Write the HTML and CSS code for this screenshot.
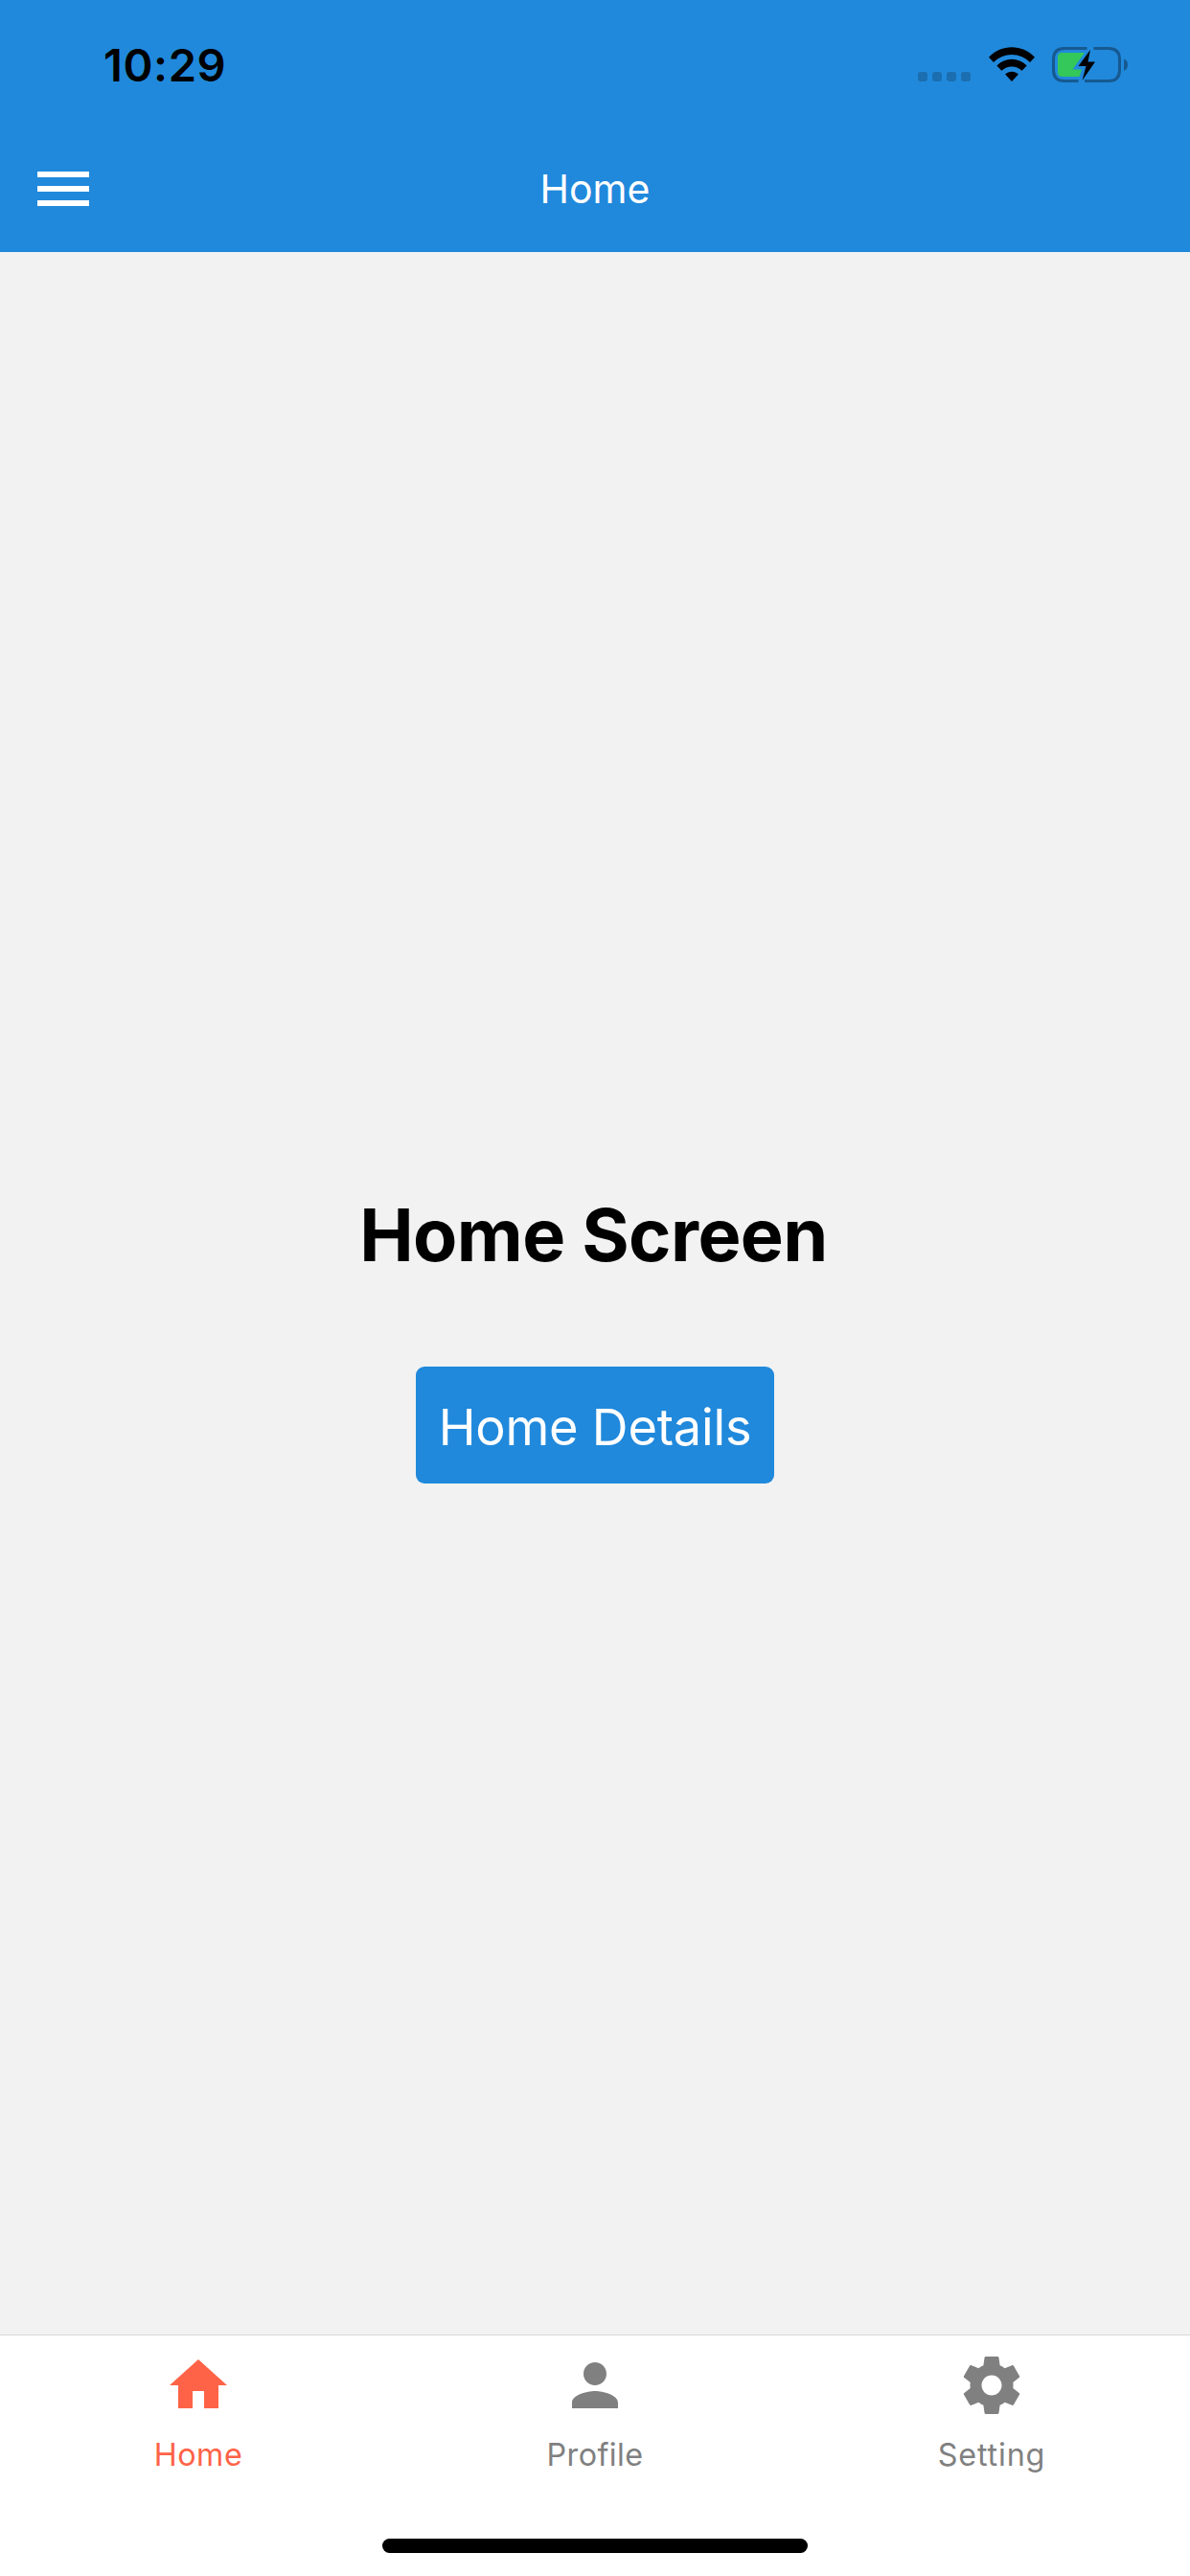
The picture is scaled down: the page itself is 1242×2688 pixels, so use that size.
FILE: index.html
```html
<!DOCTYPE html>
<html lang="en">
<head>
<meta charset="utf-8">
<title>Home</title>
<link rel="stylesheet" href="styles.css">
</head>
<body>
<div class="app">
  <header class="header">
    <div class="status-bar">
      <span class="time">10:29</span>
      <div class="status-icons">
        <div class="signal"><i></i><i></i><i></i><i></i></div>
        <svg class="wifi" width="48" height="36" viewBox="0 0 48 36">
          <path d="M0 10.700C13.500-3.200 34.500-3.200 48 10.700L43 16C32.500 5.200 15.500 5.200 5 16Z"/>
          <path d="M8.300 19.400C17.200 10.500 30.800 10.500 39.700 19.400L34.600 24.800C28.700 18.900 19.300 18.900 13.400 24.800Z"/>
          <path d="M17.100 28.500C21.100 24.900 26.900 24.900 30.900 28.500L24 36Z"/>
        </svg>
        <svg class="battery" width="80" height="38" viewBox="0 0 80 38">
          <path class="shell" d="M36.500 1.500H13Q1.500 1.500 1.500 13V24Q1.500 35.500 13 35.500H27.500M43.500 1.500H59Q70.500 1.500 70.500 13V24Q70.500 35.500 59 35.500H34"/>
          <path class="tip" d="M75 12.500Q79 14 79 18.500Q79 23 75 25Z"/>
          <path class="charge" d="M11 6H34L21.500 23.500H31L28.500 31H11Q6 31 6 26V11Q6 6 11 6Z"/>
          <path d="M40 3L27.500 20H35.500L31.500 35L45 15.500H37.500Z"/>
        </svg>
      </div>
    </div>
    <div class="nav-bar">
      <button class="menu" aria-label="Menu">
        <svg width="72" height="72" viewBox="0 0 24 24"><path d="M3 18h18v-2H3v2zm0-5h18v-2H3v2zm0-7v2h18V6H3z"/></svg>
      </button>
      <span class="nav-title">Home</span>
    </div>
  </header>
  <main class="screen">
    <h1 class="heading">Home Screen</h1>
    <button class="details">Home Details</button>
  </main>
  <footer class="footer">
    <nav class="tabs">
      <a class="tab active">
        <svg width="72" height="72" viewBox="0 0 24 24"><path d="M10 20v-6h4v6h5v-8h3L12 3 2 12h3v8z"/></svg>
        <span class="label-home">Home</span>
      </a>
      <a class="tab">
        <svg width="72" height="72" viewBox="0 0 24 24"><path d="M12 12c2.210 0 4-1.790 4-4s-1.790-4-4-4-4 1.790-4 4 1.790 4 4 4zm0 2c-2.670 0-8 1.340-8 4v2h16v-2c0-2.660-5.330-4-8-4z"/></svg>
        <span class="label-profile">Profile</span>
      </a>
      <a class="tab">
        <svg width="72" height="72" viewBox="0 0 24 24"><path d="M19.430 12.980c.04-.32.07-.64.07-.98s-.03-.66-.07-.98l2.110-1.650c.19-.15.24-.42.12-.64l-2-3.460c-.12-.22-.39-.3-.61-.22l-2.490 1c-.52-.4-1.080-.73-1.690-.98l-.38-2.650C14.460 2.180 14.250 2 14 2h-4c-.25 0-.46.18-.49.42l-.38 2.650c-.61.25-1.170.59-1.690.98l-2.490-1c-.23-.09-.49 0-.61.22l-2 3.460c-.13.22-.07.49.12.64l2.110 1.650c-.04.32-.07.65-.07.98s.03.66.07.98l-2.110 1.650c-.19.15-.24.42-.12.64l2 3.460c.12.22.39.3.61.22l2.490-1c.52.4 1.080.73 1.690.98l.38 2.650c.03.24.24.42.49.42h4c.25 0 .46-.18.49-.42l.38-2.650c.61-.25 1.170-.59 1.690-.98l2.490 1c.23.09.49 0 .61-.22l2-3.460c.12-.22.07-.49-.12-.64l-2.110-1.650zM12 15.500c-1.930 0-3.500-1.570-3.500-3.500s1.570-3.500 3.500-3.500 3.500 1.570 3.500 3.500-1.570 3.500-3.500 3.500z"/></svg>
        <span class="label-setting">Setting</span>
      </a>
    </nav>
    <div class="home-indicator"></div>
  </footer>
</div>
</body>
</html>
```
FILE: styles.css
```css
* { box-sizing: border-box; }
body { margin: 0; font-family: Inter, "Liberation Sans", sans-serif; }
button { border: 0; background: none; padding: 0; font: inherit; color: inherit; }
svg { display: block; }

.app { display: flex; flex-direction: column; width: 1242px; height: 2688px; background: #f2f2f2; }

.header { height: 263px; background: #2089dc; }
.status-bar { height: 131px; display: flex; justify-content: space-between; align-items: flex-start; padding: 0 64px 0 108px; }
.time { margin-top: 38px; font-size: 47px; line-height: 60px; font-weight: 600; letter-spacing: 0.6px; color: #000; }
.status-icons { display: flex; align-items: flex-start; padding-top: 49px; }
.signal { display: flex; gap: 5px; padding-top: 26px; margin-right: 19px; }
.signal i { width: 10px; height: 10px; border-radius: 3px; background: #1b6eb0; }
.battery { margin-left: 18px; }
.shell { fill: none; stroke: #165990; stroke-width: 3; }
.tip { fill: #165990; }
.charge { fill: #34c759; }

.nav-bar { height: 132px; display: grid; grid-template-columns: 1fr auto 1fr; align-items: center; padding: 0 30px; }
.menu { width: 72px; height: 72px; fill: #fff; }
.nav-title { font-size: 41px; line-height: 50px; color: #fff; }

.screen { flex: 1; display: flex; flex-direction: column; align-items: center; padding-top: 979px; }
.heading { margin: 0 0 90px; padding-right: 3px; font-size: 75.6px; line-height: 94px; font-weight: 700; letter-spacing: -0.55px; color: #000; white-space: nowrap; }
.details { width: 374px; height: 122px; border-radius: 9px; background: #2089dc; color: #fff; font-size: 52.3px; line-height: 64px; letter-spacing: -0.2px; padding-top: 4px; white-space: nowrap; }

.footer { height: 252px; display: flex; flex-direction: column; justify-content: space-between; align-items: center; padding-bottom: 24px; background: #fff; border-top: 1px solid #d8d8d8; }
.tabs { width: 100%; display: grid; grid-template-columns: repeat(3, 1fr); padding-top: 16px; }
.tab { display: flex; flex-direction: column; align-items: center; gap: 17px; font-size: 32.3px; line-height: 40px; color: #808080; fill: currentColor; }
.active { color: #ff6347; }
.label-home { letter-spacing: 0.5px; }
.label-profile { letter-spacing: 0.4px; }
.label-setting { letter-spacing: 0.85px; }
.home-indicator { width: 444px; height: 15px; border-radius: 8px; background: #000; }
```
